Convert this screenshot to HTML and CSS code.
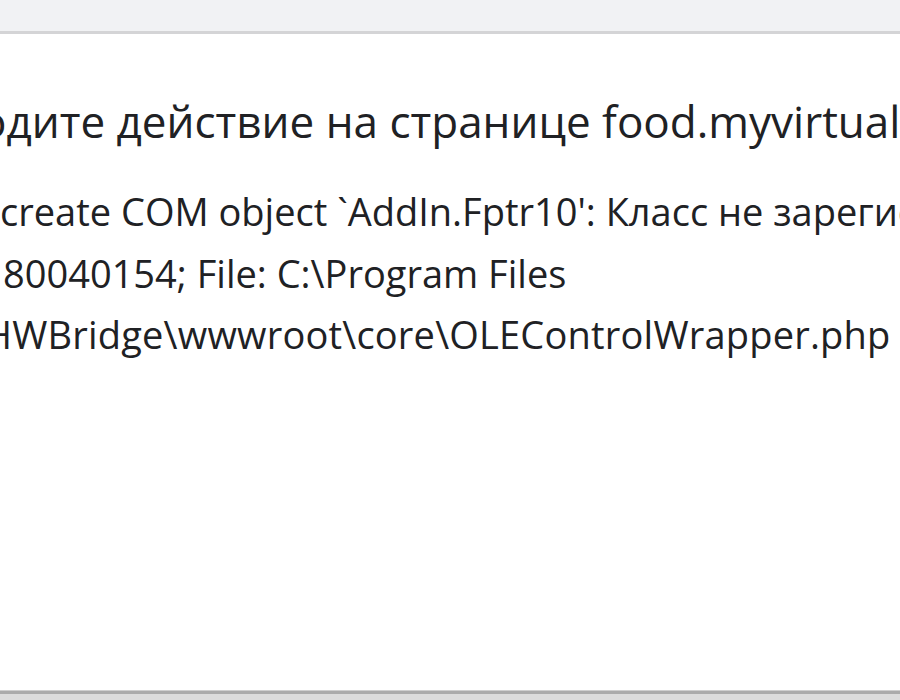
FILE: index.html
```html
<!DOCTYPE html>
<html lang="ru">
<head>
<meta charset="utf-8">
<title>Dialog</title>
<link rel="stylesheet" href="styles.css">
</head>
<body>
  <div class="topbar"></div>
  <main class="dialog">
    <div class="title">одите действие на странице food.myvirtualcafe.ru</div>
    <div class="message">
      <div class="line line-1">create COM object `AddIn.Fptr10': Класс не зарегистрирован</div>
      <div class="line line-2">80040154; File: C:\Program Files</div>
      <div class="line line-3">HWBridge\wwwroot\core\OLEControlWrapper.php</div>
    </div>
  </main>
  <div class="bottom"></div>
</body>
</html>
```
FILE: styles.css
```css
html, body {
  margin: 0;
  padding: 0;
  width: 900px;
  height: 700px;
  overflow: hidden;
  background: #ffffff;
  font-family: "Open Sans", "Noto Sans", sans-serif;
  color: #202124;
}

.topbar {
  height: 31px;
  background: #f1f2f4;
  border-bottom: 3px solid #d4d4d6;
}

.dialog {
  height: 656px;
  background: #ffffff;
  overflow: hidden;
  display: flex;
  flex-direction: column;
}

.title {
  white-space: nowrap;
  font-size: 44px;
  line-height: 50px;
  margin-top: 62px;
  text-indent: -20px;
}

.message {
  margin-top: 35px;
  display: flex;
  flex-direction: column;
}

.line {
  white-space: nowrap;
  font-size: 38px;
  line-height: 61.5px;
}

.line-1 { text-indent: 0; }
.line-2 { text-indent: 3px; }
.line-3 { text-indent: -16px; letter-spacing: 0.2px; }

.bottom {
  height: 9px;
  background: #dcdcdc;
  border-top: 1px solid #cfcfcf;
  box-shadow: inset 0 3px 0 #ababab;
}
```
